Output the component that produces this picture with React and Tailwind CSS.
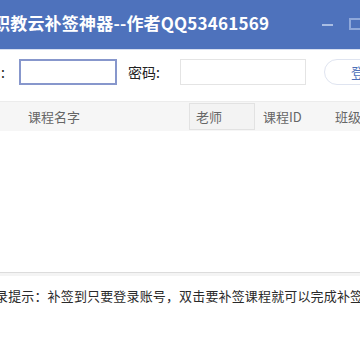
import React from "react";

const cjk = { fontFamily: '"Noto Sans CJK SC", "Noto Sans", sans-serif' };

export default function App() {
  return (
    <div className="w-[360px] h-[360px] bg-white overflow-hidden relative" style={cjk}>
      {/* title bar */}
      <div className="h-[49px] bg-[#4e72bc] flex items-center relative">
        <div className="ml-[-7px] text-white font-bold text-[17px] leading-none whitespace-nowrap mt-[-5px] tracking-[0.2px]">
          职教云补签神器--作者QQ53461569
        </div>
        <div className="absolute left-[322px] top-[24px] w-[11px] h-[2px] bg-[#a9bde3]"></div>
        <div className="absolute left-[349px] top-[18px] w-[14px] h-[12px] border-2 border-[#8fa8da]"></div>
      </div>
      <div className="h-px bg-[#d6def0]"></div>

      {/* login row */}
      <div className="flex items-center h-[26px] mt-[9px]">
        <span className="shrink-0 ml-[1px] w-[18px] text-[14px] text-[#222]">:</span>
        <div className="shrink-0 w-[98px] h-[26px] border-2 border-[#8797cc]"></div>
        <span className="shrink-0 ml-[11px] w-[52px] text-[14px] text-[#222] whitespace-nowrap">密码:</span>
        <div className="shrink-0 w-[126px] h-[26px] border border-[#e4e4e4]"></div>
        <div className="shrink-0 ml-[18px] w-[60px] h-[26px] rounded-full border border-[#dfe4f0] flex items-center pl-[26px] text-[14px] text-[#4d6fb8] whitespace-nowrap">
          登录
        </div>
      </div>

      {/* table header */}
      <div className="mt-[16px] h-px bg-[#ececec]"></div>
      <div className="h-[29px] bg-[#f6f6f6] flex items-center text-[13px] text-[#666] whitespace-nowrap">
        <span className="shrink-0 ml-[28px] w-[161px]">课程名字</span>
        <div className="shrink-0 w-[66px] h-[27px] border border-[#e2e2e2] bg-[#f3f3f3] flex items-center pl-[6px]">老师</div>
        <span className="shrink-0 ml-[8px] w-[72px]">课程ID</span>
        <span className="shrink-0">班级</span>
      </div>

      {/* table body */}
      <div className="h-[141px] bg-white"></div>
      <div className="h-px bg-[#dcdcdc]"></div>
      <div className="h-[3px] bg-[#f4f4f4]"></div>

      {/* footer tip */}
      <div className="mt-[13px] ml-[-5px] text-[13px] text-[#2a2a2a] whitespace-nowrap leading-none tracking-[0.15px]">
        录提示：补签到只要登录账号，双击要补签课程就可以完成补签
      </div>
    </div>
  );
}
